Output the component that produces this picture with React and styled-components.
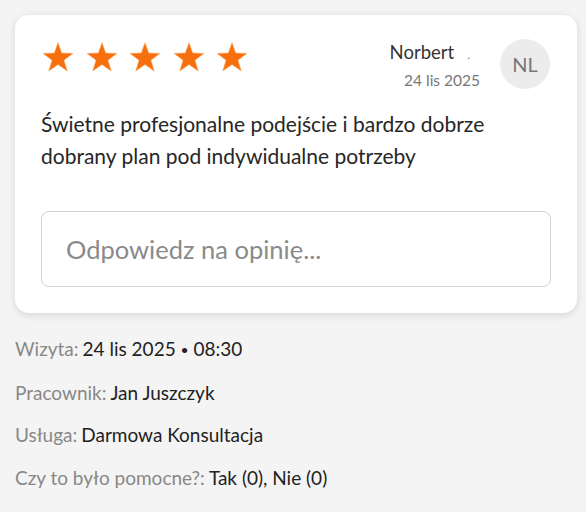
import React from 'react'
import styled, { createGlobalStyle } from 'styled-components'

const Global = createGlobalStyle`
  html, body {
    margin: 0;
    padding: 0;
    background: #f4f4f4;
    font-family: Lato, "Open Sans", sans-serif;
  }
`

const Page = styled.div`
  width: 586px;
  height: 512px;
  padding: 15px 9px 0 15px;
  box-sizing: border-box;
  overflow: hidden;
`

const Card = styled.div`
  background: #fff;
  border-radius: 14px;
  box-shadow: 0 2px 8px rgba(0, 0, 0, 0.12);
  padding: 24px 26px 26px 26px;
  height: 298px;
  box-sizing: border-box;
`

const Header = styled.div`
  display: flex;
  justify-content: space-between;
  align-items: flex-start;
`

const Stars = styled.div`
  display: flex;
  gap: 9.5px;
  padding-top: 2px;
`

const Author = styled.div`
  display: flex;
  align-items: center;
  gap: 20px;
  padding-right: 1px;
`

const AuthorText = styled.div`
  display: flex;
  flex-direction: column;
  align-items: flex-end;
`

const Name = styled.div`
  font-size: 18.5px;
  color: #333;
  line-height: 24px;
  margin-right: 10px;
  span {
    display: inline-block;
    margin-left: 13px;
    font-size: 12px;
    color: #888;
  }
`

const DateText = styled.div`
  font-size: 15.5px;
  color: #777;
  margin-top: 4px;
`

const Avatar = styled.div`
  width: 50px;
  height: 50px;
  border-radius: 50%;
  background: #ececec;
  color: #777;
  font-size: 20px;
  display: flex;
  align-items: center;
  justify-content: center;
`

const Body = styled.p`
  margin: 19px 0 0;
  font-size: 21px;
  line-height: 32px;
  color: #262626;
`

const Reply = styled.div`
  margin-top: 39px;
  height: 76px;
  border: 1.5px solid #d2d2d2;
  border-radius: 8px;
  display: flex;
  align-items: center;
  padding-left: 24px;
  font-size: 25.5px;
  color: #8a8a8a;
  box-sizing: border-box;
`

const Details = styled.div`
  padding-top: 24px;
  display: flex;
  flex-direction: column;
  gap: 18.5px;
`

const Row = styled.div`
  font-size: 19px;
  line-height: 24px;
  color: #222;
`

const Label = styled.span`
  color: #888;
  margin-right: 4px;
`

const Dot = styled.span`
  font-size: 14px;
  vertical-align: 1px;
`

const Star = () => (
  <svg width="34" height="33" viewBox="0 0 24 23">
    <path
      d="M12 1 L14.6 8.4 L22.5 8.6 L16.2 13.4 L18.5 21 L12 16.5 L5.5 21 L7.8 13.4 L1.5 8.6 L9.4 8.4 Z"
      fill="#f76f0f"
      stroke="#f9a550"
      strokeWidth="0.4"
      strokeLinejoin="round"
    />
  </svg>
)

export default function App() {
  return (
    <Page>
      <Global />
      <Card>
        <Header>
          <Stars>
            {[0, 1, 2, 3, 4].map(i => <Star key={i} />)}
          </Stars>
          <Author>
            <AuthorText>
              <Name>
                Norbert<span>.</span>
              </Name>
              <DateText>24 lis 2025</DateText>
            </AuthorText>
            <Avatar>NL</Avatar>
          </Author>
        </Header>
        <Body>
          Świetne profesjonalne podejście i bardzo dobrze dobrany plan pod indywidualne potrzeby
        </Body>
        <Reply>Odpowiedz na opinię...</Reply>
      </Card>
      <Details>
        <Row>
          <Label>Wizyta:</Label>24 lis 2025 <Dot>•</Dot> 08:30
        </Row>
        <Row>
          <Label>Pracownik:</Label>Jan Juszczyk
        </Row>
        <Row>
          <Label>Usługa:</Label>Darmowa Konsultacja
        </Row>
        <Row>
          <Label>Czy to było pomocne?:</Label>Tak (0), Nie (0)
        </Row>
      </Details>
    </Page>
  )
}
